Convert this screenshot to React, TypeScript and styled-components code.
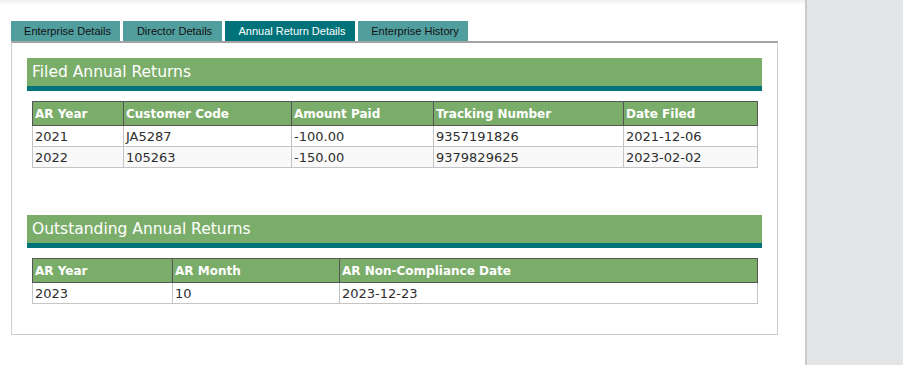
import React from 'react';
import styled, { createGlobalStyle } from 'styled-components';

const GlobalStyle = createGlobalStyle`
  html, body {
    margin: 0;
    padding: 0;
    background: #ffffff;
  }
`;

const Page = styled.div`
  display: flex;
  width: 903px;
  height: 365px;
  overflow: hidden;
`;

const Main = styled.div`
  position: relative;
  flex: 1;
  padding: 21px 27px 0 11px;
  background: linear-gradient(to bottom, #efefef 0px, #fafafa 3px, #ffffff 6px);
`;

const Sidebar = styled.div`
  width: 96px;
  background: #e4e5e7;
  border-left: 2px solid #cbcbcb;
`;

const TabBar = styled.div`
  display: flex;
  gap: 3px;
  height: 20px;
`;

const Tab = styled.div<{ $active?: boolean; $width: number }>`
  display: flex;
  align-items: center;
  justify-content: center;
  width: ${p => p.$width}px;
  height: 20px;
  padding-left: 4px;
  box-sizing: border-box;
  background: ${p => (p.$active ? '#00737a' : '#519e9f')};
  color: ${p => (p.$active ? '#ffffff' : '#111111')};
  font-family: 'Liberation Sans', Arial, sans-serif;
  font-size: 11px;
  cursor: pointer;
`;

const Panel = styled.div`
  border: 1px solid #cccccc;
  border-top: 2px solid #a3a3a3;
  padding: 15px 15px 30px 15px;
`;

const Section = styled.div<{ $gap?: number }>`
  margin-top: ${p => p.$gap || 0}px;
`;

const Heading = styled.div`
  height: 28px;
  background: #7bad6a;
  border-bottom: 5px solid #00737a;
  color: #ffffff;
  font-family: 'DejaVu Sans', Verdana, sans-serif;
  font-size: 15.5px;
  line-height: 29px;
  padding-left: 5px;
`;

const Table = styled.table`
  width: 725px;
  margin: 10px 0 0 5px;
  border-collapse: collapse;
  table-layout: fixed;
  font-family: 'DejaVu Sans', Verdana, sans-serif;
`;

const Th = styled.th`
  background: #7bad6a;
  color: #ffffff;
  font-size: 12px;
  font-weight: bold;
  text-align: left;
  height: 23px;
  padding: 0 2px;
  border: 1px solid #555555;
`;

const Tr = styled.tr<{ $alt?: boolean }>`
  background: ${p => (p.$alt ? '#f9f9f9' : '#ffffff')};
`;

const Td = styled.td`
  color: #2e2e2e;
  font-size: 13px;
  height: 20px;
  padding: 0 2px;
  border: 1px solid #c4c4c4;
`;

const tabs = [
  { label: 'Enterprise Details', width: 109 },
  { label: 'Director Details', width: 99 },
  { label: 'Annual Return Details', width: 130, active: true },
  { label: 'Enterprise History', width: 110 },
];

const filedCols = [
  { label: 'AR Year', width: 91 },
  { label: 'Customer Code', width: 168 },
  { label: 'Amount Paid', width: 142 },
  { label: 'Tracking Number', width: 190 },
  { label: 'Date Filed', width: 134 },
];

const filed = [
  ['2021', 'JA5287', '-100.00', '9357191826', '2021-12-06'],
  ['2022', '105263', '-150.00', '9379829625', '2023-02-02'],
];

const outstandingCols = [
  { label: 'AR Year', width: 140 },
  { label: 'AR Month', width: 167 },
  { label: 'AR Non-Compliance Date', width: 418 },
];

const outstanding = [['2023', '10', '2023-12-23']];

type Col = { label: string; width: number };

const DataTable: React.FC<{ cols: Col[]; rows: string[][] }> = ({ cols, rows }) => (
  <Table>
    <colgroup>
      {cols.map(c => (
        <col key={c.label} style={{ width: c.width }} />
      ))}
    </colgroup>
    <thead>
      <tr>
        {cols.map(c => (
          <Th key={c.label}>{c.label}</Th>
        ))}
      </tr>
    </thead>
    <tbody>
      {rows.map((r, i) => (
        <Tr key={i} $alt={i % 2 === 1}>
          {r.map((v, j) => (
            <Td key={j}>{v}</Td>
          ))}
        </Tr>
      ))}
    </tbody>
  </Table>
);

const App: React.FC = () => {
  return (
    <>
      <GlobalStyle />
      <Page>
        <Main>
          <TabBar>
            {tabs.map(t => (
              <Tab key={t.label} $active={t.active} $width={t.width}>
                {t.label}
              </Tab>
            ))}
          </TabBar>
          <Panel>
            <Section>
              <Heading>Filed Annual Returns</Heading>
              <DataTable cols={filedCols} rows={filed} />
            </Section>
            <Section $gap={47}>
              <Heading>Outstanding Annual Returns</Heading>
              <DataTable cols={outstandingCols} rows={outstanding} />
            </Section>
          </Panel>
        </Main>
        <Sidebar />
      </Page>
    </>
  );
};

export default App;
